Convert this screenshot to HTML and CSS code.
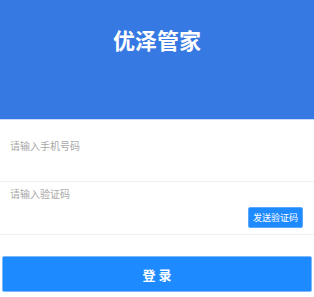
FILE: index.html
```html
<!DOCTYPE html>
<html lang="zh-CN">
<head>
<meta charset="utf-8">
<title>优泽管家</title>
<link rel="stylesheet" href="styles.css">
</head>
<body>
<div class="page">
  <header class="hero">
    <h1 class="title">优泽管家</h1>
  </header>
  <div class="form">
    <div class="field field-phone">
      <span class="placeholder">请输入手机号码</span>
    </div>
    <div class="field field-code">
      <span class="placeholder">请输入验证码</span>
      <div class="code-row">
        <button class="send-btn">发送验证码</button>
      </div>
    </div>
  </div>
  <button class="login-btn">登 录</button>
</div>
</body>
</html>
```
FILE: styles.css
```css
* { box-sizing: border-box; }
html, body { margin: 0; padding: 0; background: #fff; }
body {
  font-family: "Noto Sans CJK SC", "Noto Sans", sans-serif;
  width: 314px;
  height: 297px;
  overflow: hidden;
}
.page { display: flex; flex-direction: column; }
.hero {
  height: 120px;
  background: #3679e3;
  border-bottom: 1px solid #c9dbf7;
  display: flex;
  justify-content: center;
}
.title {
  margin: 25px 0 0;
  color: #fff;
  font-size: 22px;
  line-height: 28px;
  font-weight: 700;
}
.form { display: flex; flex-direction: column; }
.field {
  border-bottom: 1px solid #f0f0f0;
  padding-left: 10px;
}
.placeholder {
  display: block;
  color: #a8a8a8;
  font-size: 10px;
  line-height: 16px;
}
.field-phone { height: 62px; padding-top: 18px; }
.field-code { height: 53px; padding-top: 4px; }
.code-row {
  display: flex;
  justify-content: flex-end;
  padding-right: 11px;
  margin-top: 5px;
}
.send-btn {
  width: 55px;
  height: 21px;
  padding: 0;
  border: 1px solid #5aa8ff;
  border-radius: 2px;
  background: #1e8aff;
  color: #fff;
  font-family: inherit;
  font-size: 9px;
  line-height: 19px;
}
.login-btn {
  margin: 21px 2px 0;
  height: 36px;
  border: 1px solid #7db8ff;
  border-radius: 2px;
  background: #1e8aff;
  color: #fff;
  font-family: inherit;
  font-size: 13px;
  font-weight: 700;
  padding: 0;
}
```
